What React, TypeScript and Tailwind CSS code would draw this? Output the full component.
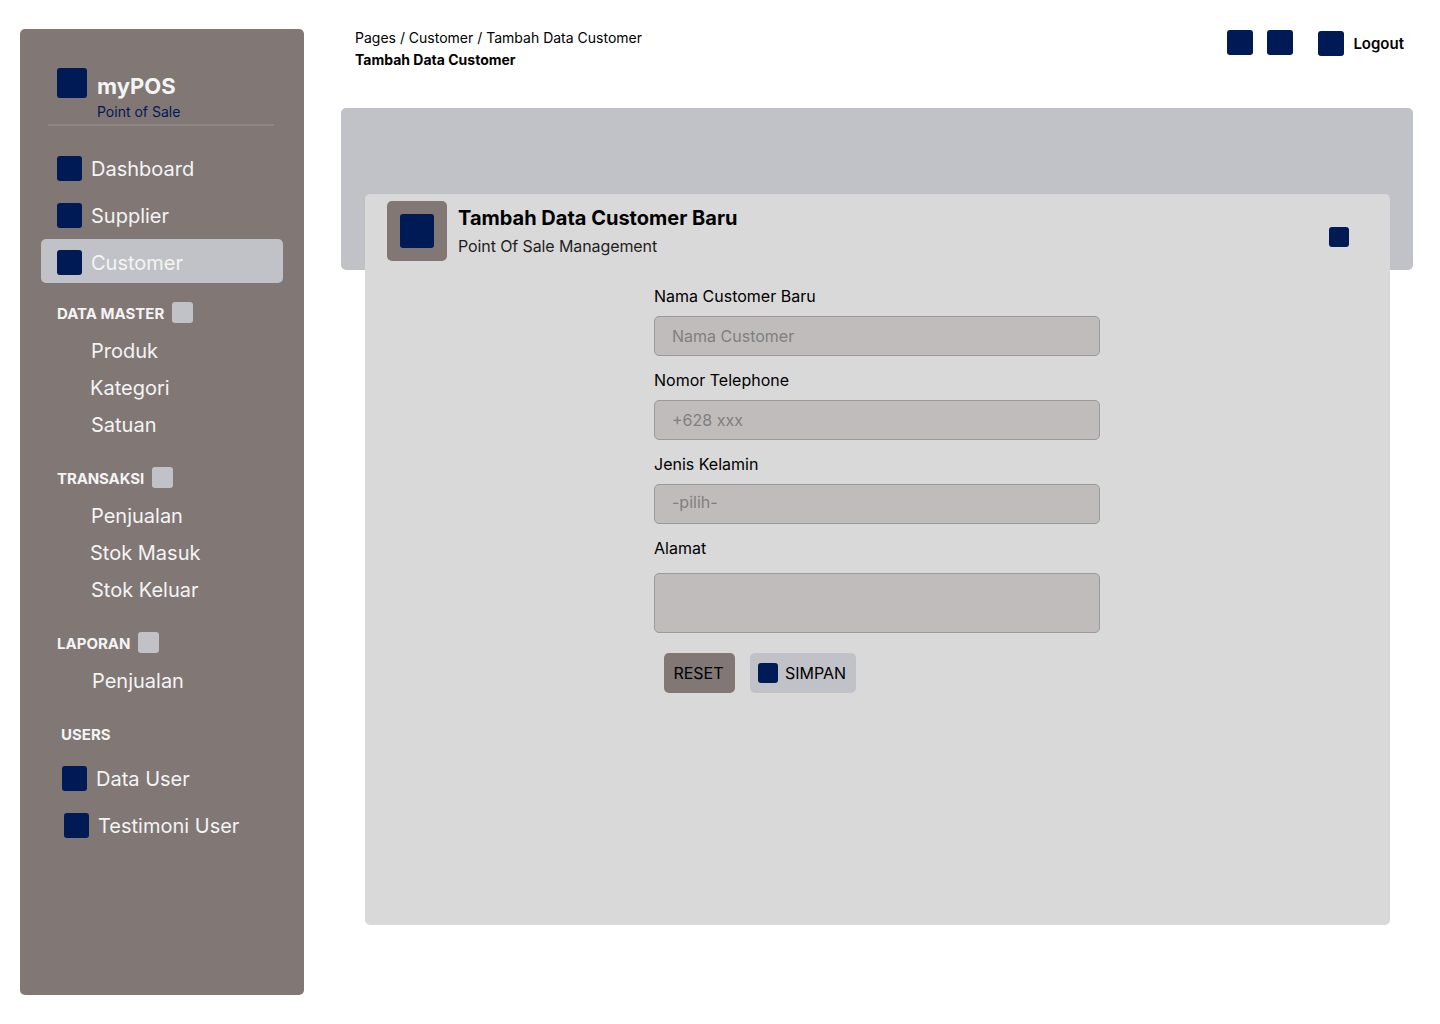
const Box = ({ className = '' }: { className?: string }) => (
  <div className={`shrink-0 bg-[#001a56] ${className}`}></div>
);

const NavItem = ({ label, active, className = '' }: { label: string; active?: boolean; className?: string }) => (
  <div className={`flex h-[44px] items-center gap-[9px] rounded-[5px] pt-[2px] pl-[16px] ${active ? 'bg-[#c1c2c7]' : ''} ${className}`}>
    <Box className="h-[25px] w-[25px] rounded-[3px]" />
    <span className="mt-[2px] text-[20px] leading-[24px] text-[#f4f4f4]">{label}</span>
  </div>
);

const SectionTitle = ({ label, className = '' }: { label: string; className?: string }) => (
  <div className={`flex h-[21px] items-center pl-[16px] ${className}`}>
    <span className="mt-[2px] text-[15px] font-bold leading-[18px] text-[#f4f4f4]">{label}</span>
    <div className="ml-[8px] h-[21px] w-[21px] rounded-[3px] bg-[#c1c2c7]"></div>
  </div>
);

const SubItem = ({ label, indent = 'pl-[50px]' }: { label: string; indent?: string }) => (
  <div className={`h-[37px] text-[20px] leading-[37px] text-[#f4f4f4] ${indent}`}>{label}</div>
);

const Field = ({ label, placeholder, textClass = '' }: { label: string; placeholder: string; textClass?: string }) => (
  <div className="h-[84px]">
    <div className="h-[30px] text-[16px] leading-[20px] text-black">{label}</div>
    <div className="flex h-[40px] items-center rounded-[5px] border border-[#9a9a9a] bg-[#c0bcbb] pl-[17px] text-[16px] text-[#7f7f7f]">
      <span className={textClass}>{placeholder}</span>
    </div>
  </div>
);

export default function App() {
  return (
    <div className="flex h-[1024px] w-[1440px] bg-white pt-[29px] pl-[20px] font-['Inter',sans-serif]">
      <aside className="h-[966px] w-[284px] shrink-0 rounded-[5px] bg-[#817775]">
        <div className="ml-[28px] mr-[30px] h-[97px] border-b-2 border-[#8f8585] pt-[39px]">
          <div className="flex gap-[10px] pl-[9px]">
            <Box className="h-[30px] w-[30px] rounded-[3px]" />
            <div>
              <div className="mt-[3px] text-[22px] font-bold leading-[30px] text-[#f4f4f4]">myPOS</div>
              <div className="mt-[2px] text-[14px] leading-[17px] text-[#001a56]">Point of Sale</div>
            </div>
          </div>
        </div>

        <nav className="mt-[20px] px-[21px]">
          <NavItem label="Dashboard" className="mb-[3px] -mt-[1px]" />
          <NavItem label="Supplier" className="mb-[3px]" />
          <NavItem label="Customer" active />
        </nav>

        <SectionTitle label="DATA MASTER" className="mt-[19px] ml-[21px]" />
        <div className="mt-[10px]">
          <SubItem label="Produk" indent="pl-[71px]" />
          <SubItem label="Kategori" indent="pl-[70px]" />
          <SubItem label="Satuan" indent="pl-[71px]" />
        </div>

        <SectionTitle label="TRANSAKSI" className="mt-[23px] ml-[21px] tracking-[-0.1px]" />
        <div className="mt-[10px]">
          <SubItem label="Penjualan" indent="pl-[71px]" />
          <SubItem label="Stok Masuk" indent="pl-[70px]" />
          <SubItem label="Stok Keluar" indent="pl-[71px]" />
        </div>

        <SectionTitle label="LAPORAN" className="mt-[23px] ml-[21px]" />
        <div className="mt-[10px]">
          <SubItem label="Penjualan" indent="pl-[72px]" />
        </div>

        <div className="mt-[26px] pl-[41px] text-[15px] font-bold leading-[17px] text-[#f4f4f4]">USERS</div>
        <div className="mt-[12px] px-[21px]">
          <NavItem label="Data User" className="ml-[5px] mb-[3px]" />
          <NavItem label="Testimoni User" className="ml-[7px]" />
        </div>
      </aside>

      <main className="ml-[37px] w-[1072px] shrink-0">
        <header className="flex h-[79px] items-start justify-between pl-[14px] pr-[9px]">
          <div>
            <div className="text-[14px] leading-[17px] text-black">Pages / Customer / Tambah Data Customer</div>
            <div className="mt-[5px] text-[14px] font-bold leading-[17px] text-black">Tambah Data Customer</div>
          </div>
          <div className="mt-[1px] flex items-start">
            <Box className="h-[25px] w-[26px] rounded-[3px]" />
            <Box className="ml-[14px] h-[25px] w-[26px] rounded-[3px]" />
            <Box className="ml-[25px] mt-[1px] h-[25px] w-[26px] rounded-[3px]" />
            <span className="ml-[9px] mt-[5px] text-[15px] font-semibold leading-[18px] text-black">Logout</span>
          </div>
        </header>

        <div className="h-[162px] rounded-[5px] bg-[#c1c2c7]"></div>

        <section className="relative mx-[24px] -mt-[76px] h-[731px] w-[1025px] rounded-[5px] bg-[#d9d9d9]">
          <div className="flex pt-[7px] pl-[22px]">
            <div className="flex h-[60px] w-[60px] items-center justify-center rounded-[5px] bg-[#817775]">
              <Box className="h-[34px] w-[34px] rounded-[3px]" />
            </div>
            <div className="ml-[11px] w-[591px] pt-[5px]">
              <div className="text-[20px] font-bold leading-[24px] text-black">Tambah Data Customer Baru</div>
              <div className="mt-[7px] text-[16px] leading-[19px] tracking-[-0.1px] text-[#1f1f1f]">Point Of Sale Management</div>
            </div>
            <Box className="ml-[280px] mt-[26px] h-[20px] w-[20px] rounded-[3px]" />
          </div>

          <div className="ml-[289px] mt-[25px] w-[446px]">
            <Field label="Nama Customer Baru" placeholder="Nama Customer" />
            <Field label="Nomor Telephone" placeholder="+628 xxx" />
            <Field label="Jenis Kelamin" placeholder="-pilih-" textClass="mb-[4px]" />
            <div className="h-[35px] text-[16px] leading-[20px] text-black">Alamat</div>
            <div className="h-[60px] rounded-[5px] border border-[#9a9a9a] bg-[#c0bcbb]"></div>
            <div className="mt-[20px] flex pl-[10px]">
              <button className="h-[40px] w-[71px] rounded-[5px] bg-[#817775] pr-[2px] text-[16px] text-black">RESET</button>
              <button className="ml-[15px] flex h-[40px] w-[106px] items-center gap-[7px] rounded-[5px] bg-[#c1c2c7] pl-[8px] text-[16px] text-black">
                <Box className="h-[20px] w-[20px] rounded-[3px]" />
                SIMPAN
              </button>
            </div>
          </div>
        </section>
      </main>
    </div>
  );
}
